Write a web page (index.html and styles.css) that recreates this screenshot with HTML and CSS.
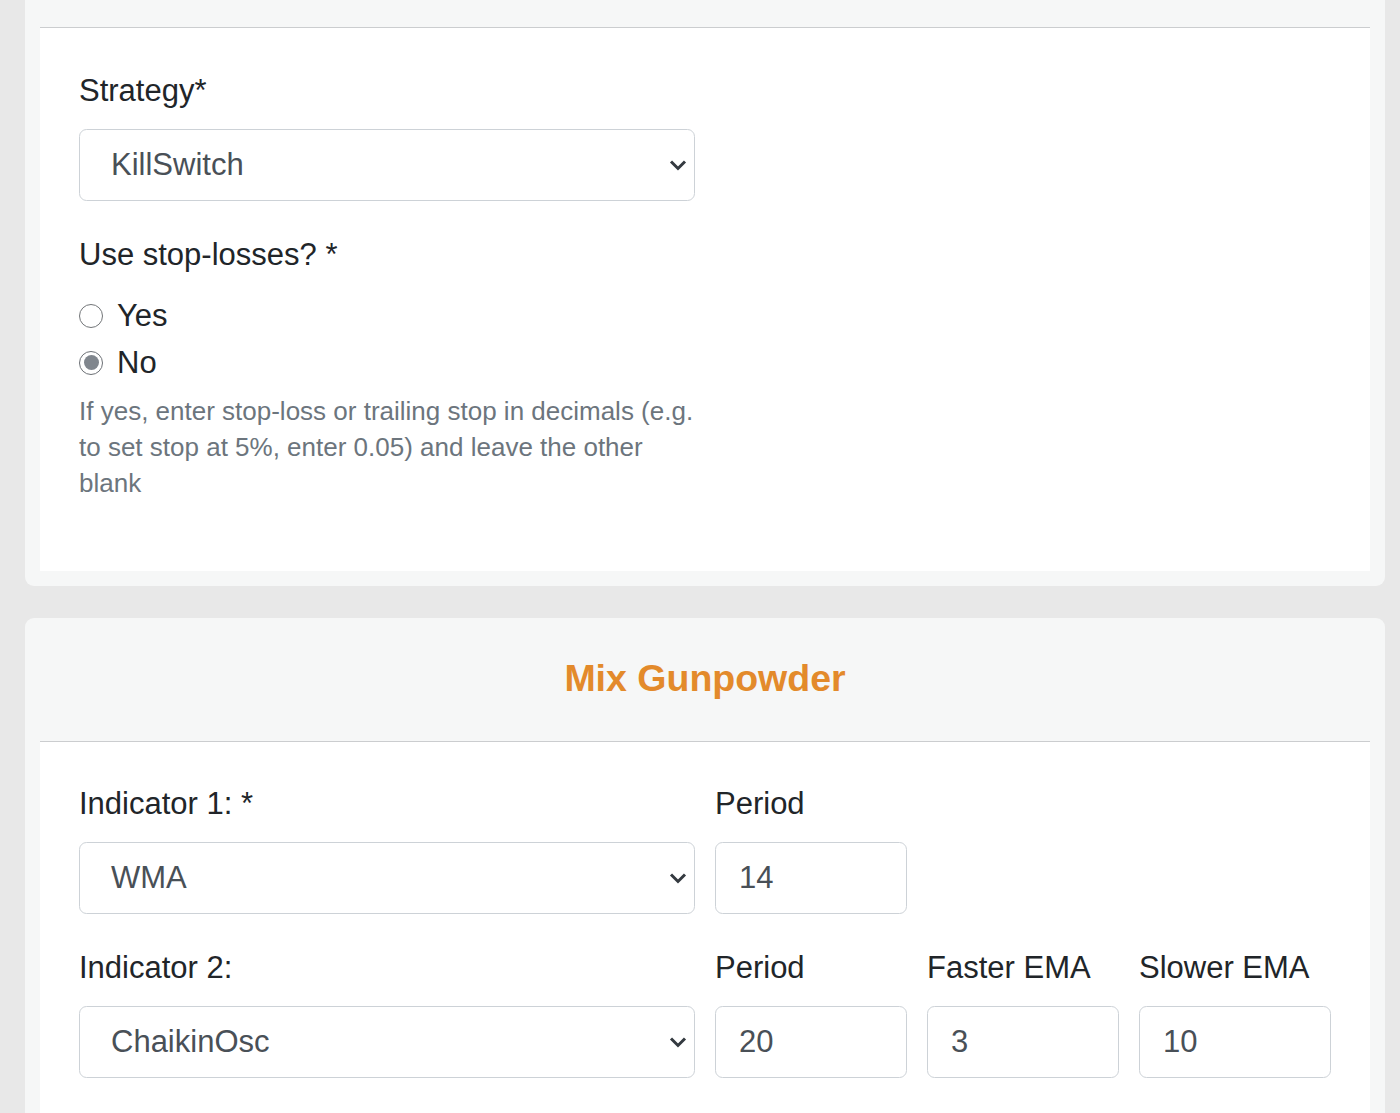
FILE: index.html
```html
<!DOCTYPE html>
<html lang="en">
<head>
<meta charset="utf-8">
<title>Strategy form</title>
<link rel="stylesheet" href="styles.css">
</head>
<body>
<div class="page">
  <section class="card card-first">
    <div class="card-header header-cut"></div>
    <div class="card-body">
      <div class="form-group">
        <label class="label">Strategy*</label>
        <div class="select half">
          <span>KillSwitch</span>
          <svg class="chev" width="18" height="12" viewBox="0 0 18 12"><path d="M2 2.5 L9 9.5 L16 2.5" fill="none" stroke="#343a40" stroke-width="3"/></svg>
        </div>
      </div>
      <div class="form-group">
        <label class="label">Use stop-losses? *</label>
        <div class="radio-row"><span class="radio"></span><span>Yes</span></div>
        <div class="radio-row"><span class="radio checked"></span><span>No</span></div>
        <p class="help">If yes, enter stop-loss or trailing stop in decimals (e.g. to set stop at 5%, enter 0.05) and leave the other blank</p>
      </div>
    </div>
  </section>

  <section class="card card-second">
    <div class="card-header">
      <h2 class="title">Mix Gunpowder</h2>
    </div>
    <div class="card-body">
      <div class="form-row">
        <div class="form-group span6">
          <label class="label">Indicator 1: *</label>
          <div class="select">
            <span>WMA</span>
            <svg class="chev" width="18" height="12" viewBox="0 0 18 12"><path d="M2 2.5 L9 9.5 L16 2.5" fill="none" stroke="#343a40" stroke-width="3"/></svg>
          </div>
        </div>
        <div class="form-group span2">
          <label class="label">Period</label>
          <div class="input">14</div>
        </div>
      </div>
      <div class="form-row">
        <div class="form-group span6">
          <label class="label">Indicator 2:</label>
          <div class="select">
            <span>ChaikinOsc</span>
            <svg class="chev" width="18" height="12" viewBox="0 0 18 12"><path d="M2 2.5 L9 9.5 L16 2.5" fill="none" stroke="#343a40" stroke-width="3"/></svg>
          </div>
        </div>
        <div class="form-group span2">
          <label class="label">Period</label>
          <div class="input">20</div>
        </div>
        <div class="form-group span2">
          <label class="label">Faster EMA</label>
          <div class="input">3</div>
        </div>
        <div class="form-group span2">
          <label class="label">Slower EMA</label>
          <div class="input">10</div>
        </div>
      </div>
    </div>
  </section>
</div>
</body>
</html>
```

FILE: styles.css
```css
html, body {
  margin: 0;
  padding: 0;
}
body {
  background: #e8e8e8;
  font-family: "Liberation Sans", Arial, sans-serif;
  color: #212529;
  height: 1113px;
  overflow: hidden;
}
.page {
  padding: 0 15px 0 25px;
}
.card {
  background: #f6f7f7;
  border-radius: 9px;
  padding: 0 15px 15px;
}
.card-first {
  border-top-left-radius: 0;
  border-top-right-radius: 0;
}
.card-second {
  margin-top: 32px;
}
.card-header {
  border-bottom: 1.5px solid #cbcdcf;
  text-align: center;
}
.header-cut {
  height: 27px;
}
.title {
  margin: 0;
  padding: 38px 0 40px;
  font-size: 37.5px;
  line-height: 45px;
  font-weight: 700;
  color: #e38a2b;
}
.card-body {
  background: #fff;
  padding: 40px 39px 39px;
}
.card-second .card-body {
  padding: 39px 39px 10px;
}
.form-group {
  margin-bottom: 31px;
}
.form-row {
  display: grid;
  grid-template-columns: repeat(12, 1fr);
  column-gap: 20px;
}
.span6 { grid-column: span 6; }
.span2 { grid-column: span 2; }
.half {
  width: 615.5px;
}
.label {
  display: block;
  font-size: 31px;
  line-height: 46.5px;
  margin-bottom: 14.5px;
  color: #212529;
}
.select, .input {
  box-sizing: border-box;
  height: 72px;
  border: 1.5px solid #cdd2d7;
  border-radius: 7.5px;
  background: #fff;
  font-size: 31px;
  color: #495057;
  display: flex;
  align-items: center;
}
.select {
  justify-content: space-between;
  padding: 0 7px 0 31px;
}
.input {
  padding: 0 23px;
}
.chev {
  display: block;
}
.radio-row {
  display: flex;
  align-items: center;
  gap: 14px;
  font-size: 31px;
  line-height: 46.5px;
}
.radio {
  box-sizing: border-box;
  width: 24px;
  height: 24px;
  border-radius: 50%;
  border: 1.5px solid #727578;
  background: #fff;
  display: flex;
  align-items: center;
  justify-content: center;
}
.radio.checked {
  border-color: #6c7075;
}
.radio.checked::after {
  content: "";
  width: 15px;
  height: 15px;
  border-radius: 50%;
  background: #80868d;
}
.help {
  margin: 7px 0 0;
  width: 622px;
  font-size: 26px;
  line-height: 36px;
  color: #6c757d;
}
```
